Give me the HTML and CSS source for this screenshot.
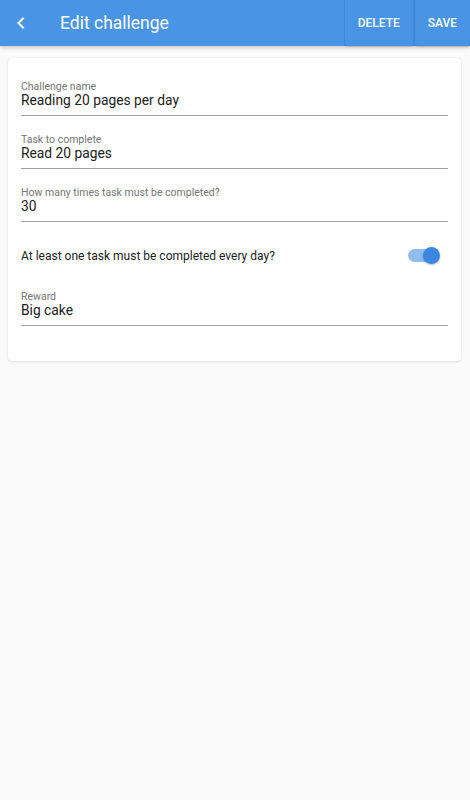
FILE: index.html
```html
<!DOCTYPE html>
<html>
<head>
<meta charset="utf-8">
<link rel="stylesheet" href="styles.css">
</head>
<body>
<header class="appbar">
  <button class="back" aria-label="Back">
    <svg width="10" height="12" viewBox="0 0 10 12"><path d="M7 1.5 L2.5 6 L7 10.5" fill="none" stroke="#fff" stroke-width="2" stroke-linecap="square"/></svg>
  </button>
  <h1 class="title">Edit challenge</h1>
  <div class="actions">
    <button class="action">DELETE</button>
    <button class="action">SAVE</button>
  </div>
</header>
<main class="content">
  <section class="card">
    <div class="field">
      <div class="label">Challenge name</div>
      <div class="value">Reading 20 pages per day</div>
    </div>
    <div class="field">
      <div class="label">Task to complete</div>
      <div class="value">Read 20 pages</div>
    </div>
    <div class="field">
      <div class="label">How many times task must be completed?</div>
      <div class="value">30</div>
    </div>
    <div class="toggle-row">
      <span class="toggle-text">At least one task must be completed every day?</span>
      <span class="switch"><span class="track"></span><span class="thumb"></span></span>
    </div>
    <div class="field">
      <div class="label">Reward</div>
      <div class="value">Big cake</div>
    </div>
  </section>
</main>
</body>
</html>
```
FILE: styles.css
```css
* { box-sizing: border-box; }
html, body { margin: 0; padding: 0; }
body {
  width: 470px;
  height: 800px;
  background: #fafafa;
  font-family: Roboto, "Noto Sans", sans-serif;
  color: #212121;
}
.appbar {
  height: 46px;
  background: #4a94e6;
  display: flex;
  align-items: stretch;
  box-shadow: 0 2px 4px rgba(0,0,0,0.18);
  position: relative;
  z-index: 1;
}
.back {
  width: 44px;
  border: 0;
  background: transparent;
  padding: 0 0 0 16px;
  display: flex;
  align-items: center;
  justify-content: flex-start;
}
.title {
  margin: 0 0 0 16px;
  font-size: 17.5px;
  font-weight: 400;
  color: #fff;
  line-height: 46px;
  flex: 1;
}
.actions {
  display: flex;
  gap: 2px;
}
.action {
  border: 0;
  margin: 0;
  background: #4a94e6;
  color: #fff;
  font-family: Roboto, sans-serif;
  font-size: 12px;
  font-weight: 500;
  padding: 0 13px;
  height: 46px;
  border-radius: 0 0 3px 3px;
  box-shadow: 0 0 1px 1px rgba(0,0,0,0.08), 0 1px 1px rgba(0,0,0,0.1);
}
.content {
  padding: 12px 9px 0 8px;
}
.card {
  background: #fff;
  border-radius: 4px;
  box-shadow: 0 1px 3px rgba(0,0,0,0.1), 0 0 1px rgba(0,0,0,0.1);
  padding: 21px 13px 35px;
}
.field {
  border-bottom: 1px solid #9e9e9e;
  padding-top: 2px;
  padding-bottom: 7px;
  margin-bottom: 16px;
}
.field:last-child { margin-bottom: 0; }
.label {
  font-size: 10.5px;
  line-height: 12px;
  color: #757575;
}
.value {
  margin-top: -1px;
  font-size: 13.8px;
  line-height: 16px;
  color: #212121;
}
.toggle-row {
  height: 35px;
  margin-bottom: 16px;
  display: flex;
  align-items: center;
  justify-content: space-between;
}
.toggle-text {
  font-size: 12px;
  color: #212121;
  margin-top: 1px;
}
.switch {
  position: relative;
  width: 32px;
  height: 17px;
  margin-right: 8px;
  display: block;
}
.track {
  position: absolute;
  left: 0;
  top: 2px;
  width: 29px;
  height: 13px;
  border-radius: 7px;
  background: #90bdf0;
}
.thumb {
  position: absolute;
  right: 0;
  top: 0;
  width: 17px;
  height: 17px;
  border-radius: 50%;
  background: #3a86e0;
  box-shadow: 0 1px 2px rgba(0,0,0,0.3);
}
```
